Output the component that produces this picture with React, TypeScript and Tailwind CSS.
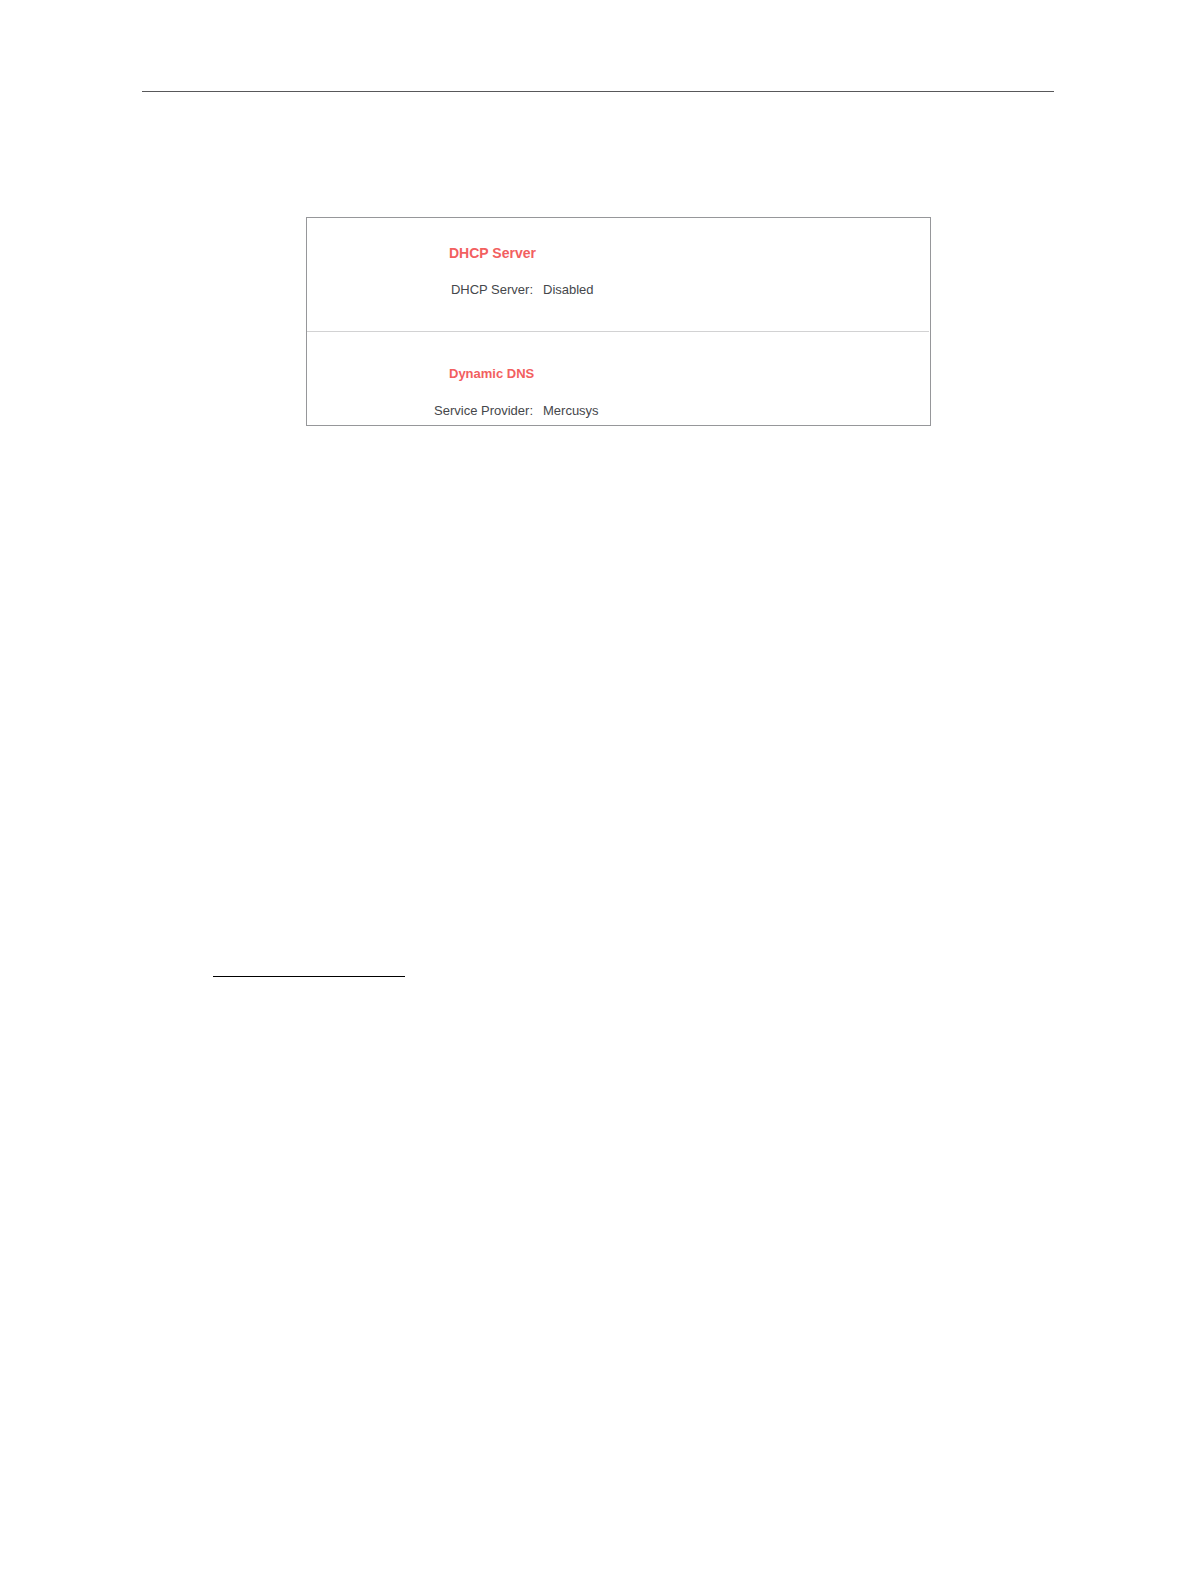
type SectionProps = {
  title: string;
  titleClass: string;
  label: string;
  value: string;
};

function StatusSection({ title, titleClass, label, value }: SectionProps) {
  return (
    <section>
      <h2 className={`ml-[142px] leading-5 font-bold text-[#f2605f] ${titleClass}`}>{title}</h2>
      <dl className="mt-[17px] flex gap-2.5 text-[13px] leading-5 text-[#45474b]">
        <dt className="w-[226px] shrink-0 text-right">{label}</dt>
        <dd>{value}</dd>
      </dl>
    </section>
  );
}

export default function App() {
  return (
    <main className="min-h-screen bg-white pt-[91px] pb-16 font-['Liberation_Sans',Arial,sans-serif]">
      <hr className="mr-[142px] ml-[142px] border-t border-[#58585a]" />
      <div className="mt-[125px] mr-[265px] ml-[306px] border border-[#96979a]">
        <div className="mr-px border-b border-[#d2d2d3] pt-[25px] pb-[31px]">
          <StatusSection
            title="DHCP Server"
            titleClass="text-sm"
            label="DHCP Server:"
            value="Disabled"
          />
        </div>
        <div className="pt-8 pb-1">
          <StatusSection
            title="Dynamic DNS"
            titleClass="text-[13px]"
            label="Service Provider:"
            value="Mercusys"
          />
        </div>
      </div>
      <hr className="mt-[550px] ml-[213px] w-48 border-t border-black" />
    </main>
  );
}
